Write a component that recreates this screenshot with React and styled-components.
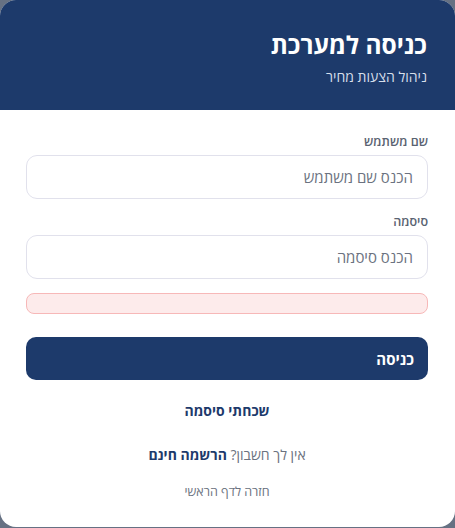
import React from "react";
import styled, { createGlobalStyle } from "styled-components";

const Global = createGlobalStyle`
  html, body { margin: 0; padding: 0; background: #667183; }
  body { font-family: "Open Sans", "Liberation Sans", sans-serif; }
  * { box-sizing: border-box; }
`;

const Card = styled.div`
  direction: rtl;
  width: 455px;
  height: 527px;
  background: #ffffff;
  border-radius: 16px;
  overflow: hidden;
  display: flex;
  flex-direction: column;
`;

const Header = styled.header`
  background: #1d3a6b;
  height: 110px;
  padding: 31px 28px 0 28px;
  color: #fff;
`;

const Title = styled.h1`
  margin: 0;
  font-size: 24.5px;
  font-weight: 700;
  line-height: 28px;
`;

const Subtitle = styled.p`
  margin: 9px 0 0 0;
  font-size: 14px;
  line-height: 18px;
  color: #d6deea;
`;

const Body = styled.form`
  padding: 24px 27px 0 26px;
  display: flex;
  flex-direction: column;
`;

const Field = styled.div`
  display: flex;
  flex-direction: column;
  gap: 5px;
  margin-bottom: 15px;
`;

const Label = styled.label`
  font-size: 12.5px;
  font-weight: 600;
  color: #5a6372;
  line-height: 16px;
`;

const Input = styled.input`
  height: 44px;
  border: 1px solid #e1e1ec;
  border-radius: 11px;
  padding: 0 14px;
  font-family: inherit;
  font-size: 15px;
  color: #111827;
  background: #fff;
  outline: none;
  &::placeholder { color: #6b7280; }
`;

const ErrorBox = styled.div`
  height: 21px;
  background: #fdebeb;
  border: 1px solid #f7b8b8;
  border-radius: 8px;
  margin-top: -1px;
`;

const SubmitButton = styled.button`
  margin-top: 23px;
  height: 43px;
  border: none;
  border-radius: 10px;
  background: #1d3a6b;
  color: #fff;
  font-family: inherit;
  font-size: 15px;
  font-weight: 700;
  text-align: right;
  padding: 0 14px;
  cursor: pointer;
`;

const Links = styled.div`
  display: flex;
  flex-direction: column;
  align-items: center;
`;

const ForgotLink = styled.a`
  margin-top: 21px;
  font-size: 14px;
  font-weight: 700;
  color: #1d3a6b;
  line-height: 19px;
  text-decoration: none;
`;

const SignupLine = styled.p`
  margin: 26px 0 0 0;
  font-size: 14px;
  color: #6b7280;
  line-height: 18px;
`;

const SignupLink = styled.a`
  font-weight: 700;
  color: #1d3a6b;
  text-decoration: none;
`;

const BackLink = styled.a`
  margin-top: 20px;
  font-size: 12.5px;
  color: #6b7280;
  line-height: 16px;
  text-decoration: none;
`;

export default function App() {
  return (
    <>
      <Global />
      <Card>
        <Header>
          <Title>כניסה למערכת</Title>
          <Subtitle>ניהול הצעות מחיר</Subtitle>
        </Header>
        <Body onSubmit={(e) => e.preventDefault()}>
          <Field>
            <Label>שם משתמש</Label>
            <Input placeholder="הכנס שם משתמש" />
          </Field>
          <Field>
            <Label>סיסמה</Label>
            <Input type="password" placeholder="הכנס סיסמה" />
          </Field>
          <ErrorBox />
          <SubmitButton type="submit">כניסה</SubmitButton>
          <Links>
            <ForgotLink href="#">שכחתי סיסמה</ForgotLink>
            <SignupLine>
              אין לך חשבון? <SignupLink href="#">הרשמה חינם</SignupLink>
            </SignupLine>
            <BackLink href="#">חזרה לדף הראשי</BackLink>
          </Links>
        </Body>
      </Card>
    </>
  );
}
